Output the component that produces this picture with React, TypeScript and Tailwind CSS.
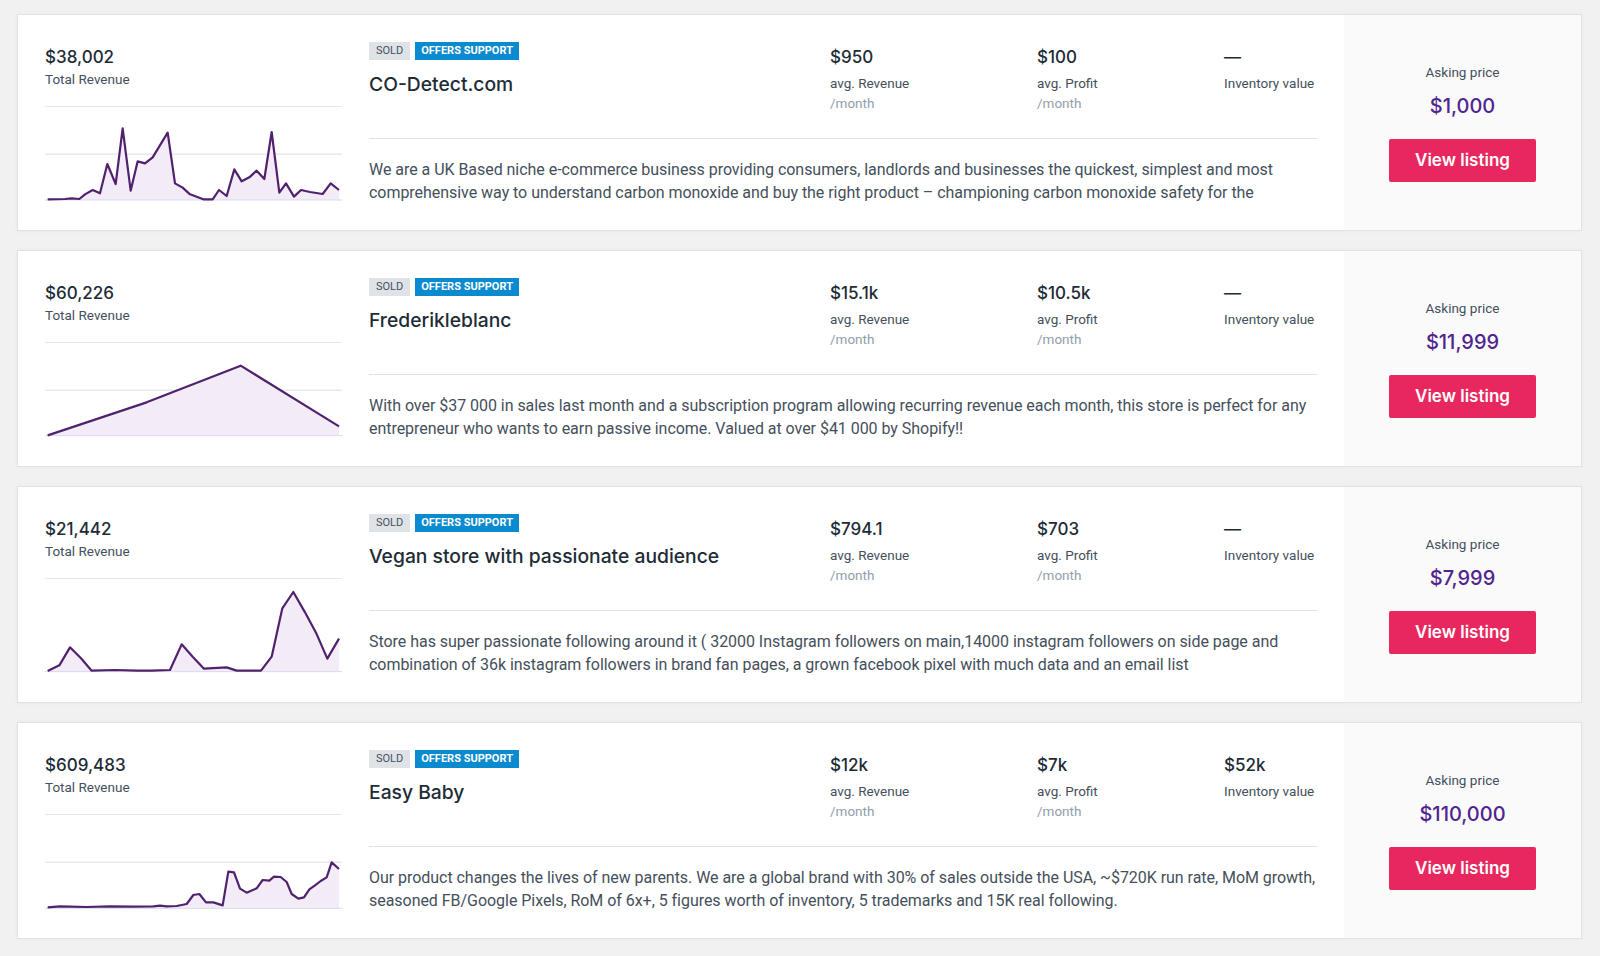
import React from "react";

type Listing = {
  revenue: string;
  title: string;
  avgRev: string;
  avgProfit: string;
  inventory: string;
  desc: string;
  price: string;
  viewBox: string;
  grid: number[];
  base: number;
  points: [number, number][];
};

const listings: Listing[] = [
  {
    revenue: "$38,002",
    title: "CO-Detect.com",
    avgRev: "$950",
    avgProfit: "$100",
    inventory: "—",
    desc: "We are a UK Based niche e-commerce business providing consumers, landlords and businesses the quickest, simplest and most comprehensive way to understand carbon monoxide and buy the right product – championing carbon monoxide safety for the betterment of everyone in the United Kingdom.",
    price: "$1,000",
    viewBox: "135 318 891 285",
    grid: [319, 463],
    base: 600,
    points: [
      [143, 598], [195, 597], [215, 595], [238, 597], [255, 583], [278, 570], [300, 580], [322, 492], [347, 552], [368, 385], [392, 572], [413, 484], [435, 490], [458, 472], [503, 398], [525, 550], [548, 563], [570, 583], [610, 598], [638, 598], [657, 570], [680, 588], [703, 508], [725, 544], [748, 532], [770, 512], [793, 537], [815, 396], [838, 578], [858, 550], [882, 590], [903, 570], [930, 576], [968, 582], [992, 550], [1017, 570],
    ],
  },
  {
    revenue: "$60,226",
    title: "Frederikleblanc",
    avgRev: "$15.1k",
    avgProfit: "$10.5k",
    inventory: "—",
    desc: "With over $37 000 in sales last month and a subscription program allowing recurring revenue each month, this store is perfect for any entrepreneur who wants to earn passive income. Valued at over $41 000 by Shopify!!",
    price: "$11,999",
    viewBox: "135 367 891 285",
    grid: [368, 512],
    base: 648,
    points: [
      [143, 647], [440, 548], [722, 438], [1017, 620],
    ],
  },
  {
    revenue: "$21,442",
    title: "Vegan store with passionate audience",
    avgRev: "$794.1",
    avgProfit: "$703",
    inventory: "—",
    desc: "Store has super passionate following around it ( 32000 Instagram followers on main,14000 instagram followers on side page and combination of 36k instagram followers in brand fan pages, a grown facebook pixel with much data and an email list",
    price: "$7,999",
    viewBox: "135 294 891 285",
    grid: [295],
    base: 575,
    points: [
      [143, 573], [178, 556], [210, 502], [243, 535], [275, 572], [345, 570], [410, 572], [455, 572], [510, 570], [545, 493], [578, 530], [612, 566], [680, 562], [710, 572], [783, 572], [815, 530], [847, 385], [880, 336], [915, 397], [948, 458], [982, 536], [1017, 476],
    ],
  },
  {
    revenue: "$609,483",
    title: "Easy Baby",
    avgRev: "$12k",
    avgProfit: "$7k",
    inventory: "$52k",
    desc: "Our product changes the lives of new parents. We are a global brand with 30% of sales outside the USA, ~$720K run rate, MoM growth, seasoned FB/Google Pixels, RoM of 6x+, 5 figures worth of inventory, 5 trademarks and 15K real following.",
    price: "$110,000",
    viewBox: "135 342 891 285",
    grid: [343, 487],
    base: 625,
    points: [
      [143, 622], [180, 619], [210, 620], [260, 621], [330, 619], [400, 620], [460, 619], [480, 617], [500, 619], [530, 618], [560, 612], [580, 585], [598, 582], [618, 607], [640, 607], [668, 616], [685, 515], [702, 517], [720, 566], [740, 578], [770, 565], [788, 540], [808, 542], [822, 530], [842, 531], [860, 546], [875, 582], [895, 596], [912, 592], [928, 568], [945, 556], [962, 543], [980, 532], [995, 487], [1017, 507],
    ],
  },
];

const heading = { fontFamily: "Inter, 'Open Sans', sans-serif" };
const body = { fontFamily: "Roboto, 'Liberation Sans', sans-serif" };

function Chart({ l }: { l: Listing }) {
  const line = l.points.map((p) => p.join(",")).join(" ");
  const first = l.points[0];
  const last = l.points[l.points.length - 1];
  const area = `${first[0]},${l.base} ${line} ${last[0]},${l.base}`;
  return (
    <svg
      viewBox={l.viewBox}
      preserveAspectRatio="none"
      className="block w-[297px] h-[95px]"
    >
      {l.grid.map((g) => (
        <line key={g} x1={135} x2={1026} y1={g} y2={g} stroke="#e6e8ec" strokeWidth={1.5} vectorEffect="non-scaling-stroke" />
      ))}
      <polygon points={area} fill="#f3ecf7" />
      <line x1={135} x2={1026} y1={l.base} y2={l.base} stroke="#d5dbee" strokeWidth={1} vectorEffect="non-scaling-stroke" />
      <polyline
        points={line}
        fill="none"
        stroke="#50226e"
        strokeWidth={2.2}
        strokeLinejoin="round"
        vectorEffect="non-scaling-stroke"
      />
    </svg>
  );
}

function Metric({ value, label, sub, w }: { value: string; label: string; sub?: string; w: string }) {
  return (
    <div className={`${w} pt-[3px]`}>
      <div className="text-[17px] leading-[24px] font-medium text-[#212b36]" style={heading}>
        {value}
      </div>
      <div className="mt-[5px] text-[13.5px] leading-[19.5px] text-[#454f5b]" style={body}>
        {label}
      </div>
      {sub && (
        <div className="text-[13.5px] leading-[19.5px] text-[#919eab]" style={body}>
          {sub}
        </div>
      )}
    </div>
  );
}

function Card({ l }: { l: Listing }) {
  return (
    <div className="flex h-[217px] bg-white border border-[#dfe3e8] shadow-[0_0_6px_rgba(0,0,0,0.03)]">
      <div className="w-[351px] shrink-0 pl-[27px] pt-[30px]">
        <div className="text-[17px] leading-[24px] font-medium text-[#212b36]" style={heading}>
          {l.revenue}
        </div>
        <div className="mt-[1px] text-[13.5px] leading-[18px] text-[#454f5b]" style={body}>
          Total Revenue
        </div>
        <div className="mt-[18px]">
          <Chart l={l} />
        </div>
      </div>
      <div className="w-[948px] shrink-0 pt-[27px]">
        <div className="flex h-[97px] border-b border-[#dfe3e8]">
          <div className="flex-1">
            <div className="flex gap-[5px]" style={body}>
              <span className="h-[18px] px-[7px] bg-[#dfe3e8] text-[#454f5b] text-[11px] leading-[18px]">SOLD</span>
              <span className="h-[18px] px-[6px] bg-[#0a8acf] text-white text-[11px] leading-[18px] font-bold">OFFERS SUPPORT</span>
            </div>
            <div className="mt-[10px] text-[19.3px] leading-[28px] font-medium text-[#212b36]" style={heading}>
              {l.title}
            </div>
          </div>
          <Metric w="w-[207px]" value={l.avgRev} label="avg. Revenue" sub="/month" />
          <Metric w="w-[187px]" value={l.avgProfit} label="avg. Profit" sub="/month" />
          <Metric w="w-[93px]" value={l.inventory} label="Inventory value" />
        </div>
        <p
          className="mt-[19px] h-[46px] overflow-hidden text-[16px] leading-[23px] tracking-[-0.04px] text-[#454f5b]"
          style={body}
        >
          {l.desc}
        </p>
      </div>
      <div className="ml-[27px] flex-1 bg-[#fafafb] flex flex-col items-center justify-center">
        <div className="text-[13.5px] leading-[18px] text-[#454f5b]" style={body}>
          Asking price
        </div>
        <div className="mt-[11px] text-[20px] leading-[28px] font-medium text-[#50248f]" style={heading}>
          {l.price}
        </div>
        <button
          className="mt-[19px] w-[147px] h-[43px] rounded-[2px] bg-[#e8275f] text-white text-[17px] font-semibold"
          style={heading}
        >
          View listing
        </button>
      </div>
    </div>
  );
}

export default function App() {
  return (
    <div className="min-h-screen bg-[#f1f1f1] pl-[17px] pr-[18px] pt-[14px] pb-[16px]">
      <div className="flex flex-col gap-[19px]">
        {listings.map((l) => (
          <Card key={l.title} l={l} />
        ))}
      </div>
    </div>
  );
}
